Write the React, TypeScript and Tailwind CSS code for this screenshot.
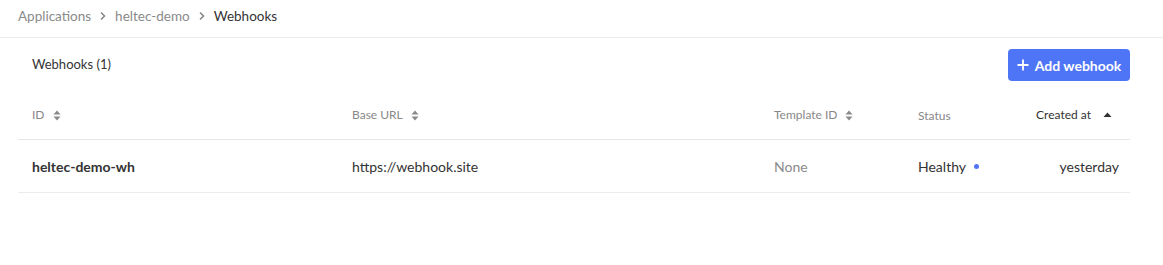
import React from "react";

const Sort = () => (
  <svg width="8" height="11" viewBox="0 0 8 11" className="ml-2 inline-block">
    <path d="M4 0.5 L7.5 4.5 H0.5 Z" fill="#8a8a8a" />
    <path d="M4 10.5 L7.5 6.5 H0.5 Z" fill="#8a8a8a" />
  </svg>
);

const Up = () => (
  <svg width="9" height="6" viewBox="0 0 9 6" className="ml-3 inline-block">
    <path d="M4.5 0.5 L8.5 5 H0.5 Z" fill="#333" />
  </svg>
);

const Chevron = () => (
  <svg width="8" height="10" viewBox="0 0 8 10" className="mx-[8px]">
    <path d="M2 1.5 L5.5 5 L2 8.5" stroke="#888" strokeWidth="1.6" fill="none" />
  </svg>
);

export default function App() {
  return (
    <div className="w-[1163px] h-[265px] bg-white text-[#333]" style={{ fontFamily: "Lato, 'Liberation Sans', sans-serif" }}>
      <div className="h-[38px] border-b border-[#ebebeb] flex items-center px-[18px] pb-[5px] text-[13.5px]">
        <span className="text-[#8a8a8a]">Applications</span>
        <Chevron />
        <span className="text-[#8a8a8a]">heltec-demo</span>
        <Chevron />
        <span className="text-[#333]">Webhooks</span>
      </div>
      <div className="px-[18px] w-[1148px]">
        <div className="flex items-center justify-between pt-[11px] pl-[14px]">
          <span className="text-[13px] text-[#333]">Webhooks (1)</span>
          <button className="h-[32px] w-[122px] rounded-[4px] bg-[#4f75f7] text-white text-[14px] font-bold flex items-center justify-center gap-[6px]">
            <svg width="12" height="12" viewBox="0 0 12 12">
              <path d="M6 0.5 V11.5 M0.5 6 H11.5" stroke="white" strokeWidth="1.8" />
            </svg>
            Add webhook
          </button>
        </div>
        <div className="mt-[10px]">
          <div className="grid grid-cols-[334px_422px_144px_1fr] h-[49px] items-center border-b border-[#e6e6e6] text-[12px] text-[#888]">
            <div className="pl-[14px] flex items-center">ID<Sort /></div>
            <div className="flex items-center">Base URL<Sort /></div>
            <div className="flex items-center">Template ID<Sort /></div>
            <div className="flex items-center justify-between pr-[18px]">
              <span className="mt-[2px]">Status</span>
              <span className="flex items-center text-[#333]">Created at<Up /></span>
            </div>
          </div>
          <div className="grid grid-cols-[334px_422px_144px_1fr] h-[53px] items-center border-b border-[#ececec] text-[14px]">
            <div className="pl-[14px] font-bold">heltec-demo-wh</div>
            <div>https://webhook.site</div>
            <div className="text-[#8a8a8a]">None</div>
            <div className="flex items-center justify-between pr-[11px]">
              <span className="flex items-center">Healthy<span className="ml-[8px] w-[5px] h-[5px] rounded-full bg-[#4f75f7]" /></span>
              <span>yesterday</span>
            </div>
          </div>
        </div>
      </div>
    </div>
  );
}
